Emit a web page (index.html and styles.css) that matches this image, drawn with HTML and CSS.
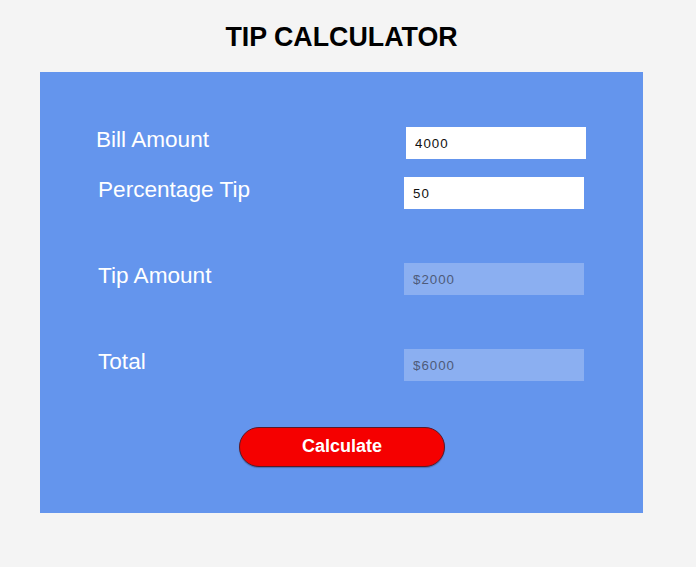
FILE: index.html
```html
<!DOCTYPE html>
<html>
<head>
<meta charset="utf-8">
<title>Tip Calculator</title>
<link rel="stylesheet" href="styles.css">
</head>
<body>
<div class="page">
  <h1 class="title">TIP CALCULATOR</h1>
  <div class="card">
    <div class="row row-wide">
      <label class="label">Bill Amount</label>
      <input class="field" type="text" value="4000">
    </div>
    <div class="row row-second">
      <label class="label">Percentage Tip</label>
      <input class="field" type="text" value="50">
    </div>
    <div class="row row-result">
      <label class="label">Tip Amount</label>
      <input class="field field-readonly" type="text" value="$2000" readonly>
    </div>
    <div class="row row-result">
      <label class="label">Total</label>
      <input class="field field-readonly" type="text" value="$6000" readonly>
    </div>
    <div class="actions">
      <button class="btn" type="button">Calculate</button>
    </div>
  </div>
</div>
</body>
</html>
```

FILE: styles.css
```css
html, body {
  margin: 0;
  padding: 0;
  background: #f4f4f4;
  font-family: "Liberation Sans", Arial, sans-serif;
}

.page {
  width: 603px;
  margin-left: 40px;
  padding-top: 22px;
}

.title {
  margin: 0 0 20px 0;
  text-align: center;
  font-size: 26.8px;
  line-height: 30px;
  font-weight: bold;
  color: #000;
}

.card {
  background: #6495ed;
  height: 441px;
  box-sizing: border-box;
  padding-top: 55px;
  display: flex;
  flex-direction: column;
}

.row {
  display: flex;
  justify-content: space-between;
  align-items: flex-start;
  margin-left: 58px;
  width: 486px;
}

.row-wide {
  margin-left: 56px;
  width: 490px;
}

.row-second {
  margin-top: 18px;
}

.row-result {
  margin-top: 54px;
}

.label {
  font-size: 22.6px;
  line-height: 24px;
  margin-top: 1px;
  color: #fff;
}

.field {
  width: 180px;
  height: 32px;
  box-sizing: border-box;
  border: none;
  outline: none;
  padding: 0 0 0 9px;
  margin: 0;
  background: #fff;
  font-family: "Liberation Sans", Arial, sans-serif;
  font-size: 13.3px;
  letter-spacing: 1px;
  color: #111;
}

.field-readonly {
  background: rgba(255, 255, 255, 0.25);
  color: #4e5b7a;
}

.actions {
  display: flex;
  justify-content: center;
  margin-top: 46px;
  padding-left: 1px;
}

.btn {
  width: 206px;
  height: 40px;
  box-sizing: border-box;
  border: 1px solid #5a1a2a;
  border-radius: 20px;
  background: #f50000;
  color: #fff;
  font-family: "Liberation Sans", Arial, sans-serif;
  font-size: 18px;
  font-weight: bold;
  padding: 0 0 2px 0;
  box-shadow: 0 1px 1px rgba(0, 0, 0, 0.25);
}
```
